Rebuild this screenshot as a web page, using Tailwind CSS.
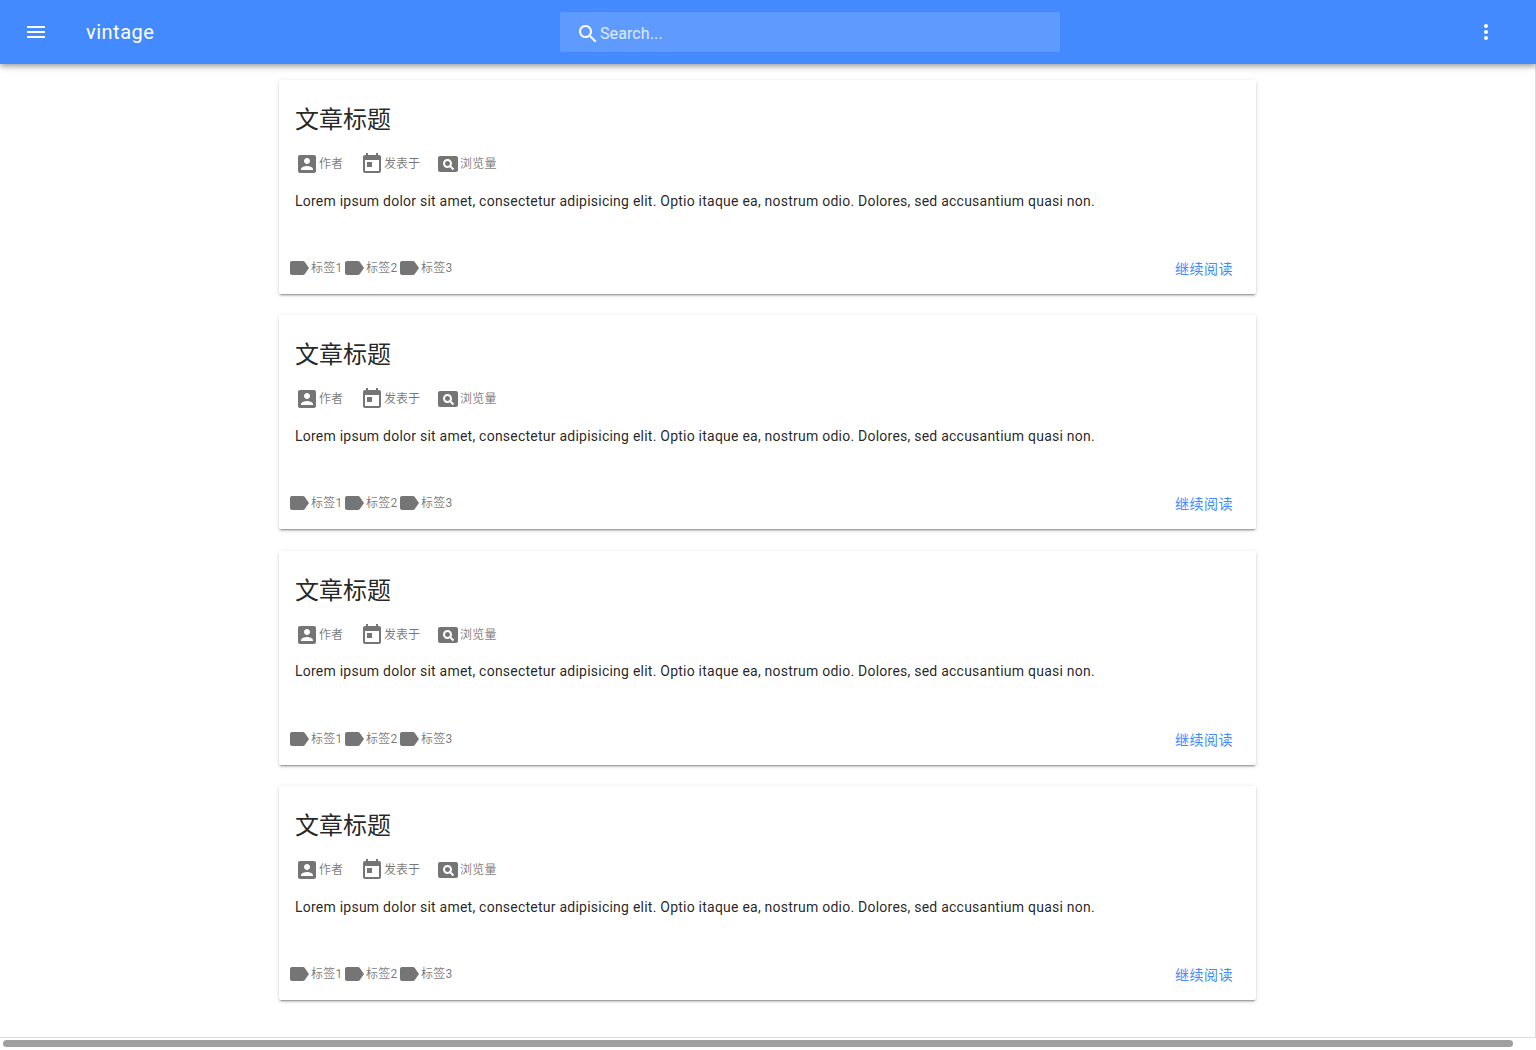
<!DOCTYPE html>
<html lang="en">
<head>
    <meta charset="UTF-8">
    <meta name="viewport" content="width=device-width, initial-scale=1.0">
    <title>vintage</title>
    <script src="https://cdn.jsdelivr.net/npm/@tailwindcss/browser@4"></script>
</head>
<body class="bg-white font-['Roboto','Noto_Sans_CJK_SC',sans-serif] overflow-hidden">
    <!-- icon set, material paths -->
    <svg class="hidden">
        <symbol id="i-menu" viewBox="0 0 24 24"><path d="M3 18h18v-2H3v2zm0-5h18v-2H3v2zm0-7v2h18V6H3z"/></symbol>
        <symbol id="i-more" viewBox="0 0 24 24"><path d="M12 8c1.1 0 2-.9 2-2s-.9-2-2-2-2 .9-2 2 .9 2 2 2zm0 2c-1.1 0-2 .9-2 2s.9 2 2 2 2-.9 2-2-.9-2-2-2zm0 6c-1.1 0-2 .9-2 2s.9 2 2 2 2-.9 2-2-.9-2-2-2z"/></symbol>
        <symbol id="i-search" viewBox="0 0 24 24"><path d="M15.5 14h-.79l-.28-.27C15.41 12.59 16 11.11 16 9.5 16 5.91 13.09 3 9.5 3S3 5.91 3 9.5 5.91 16 9.5 16c1.61 0 3.09-.59 4.23-1.57l.27.28v.79l5 4.99L20.49 19l-4.99-5zm-6 0C7.01 14 5 11.99 5 9.5S7.01 5 9.5 5 14 7.01 14 9.5 11.99 14 9.5 14z"/></symbol>
        <symbol id="i-account" viewBox="0 0 24 24"><path d="M3 5v14c0 1.1.89 2 2 2h14c1.1 0 2-.9 2-2V5c0-1.1-.9-2-2-2H5c-1.11 0-2 .9-2 2zm12 4c0 1.66-1.34 3-3 3s-3-1.34-3-3 1.34-3 3-3 3 1.34 3 3zm-9 8c0-2 4-3.1 6-3.1s6 1.1 6 3.1v1H6v-1z"/></symbol>
        <symbol id="i-today" viewBox="0 0 24 24"><path d="M19 3h-1V1h-2v2H8V1H6v2H5c-1.11 0-1.99.9-1.99 2L3 19c0 1.1.89 2 2 2h14c1.1 0 2-.9 2-2V5c0-1.1-.9-2-2-2zm0 16H5V8h14v11zM7 10h5v5H7z"/></symbol>
        <symbol id="i-pageview" viewBox="0 0 24 24"><path d="M11.5 9C10.12 9 9 10.12 9 11.5s1.12 2.5 2.5 2.5 2.5-1.12 2.5-2.5S12.88 9 11.5 9zM20 4H4c-1.1 0-2 .9-2 2v12c0 1.1.9 2 2 2h16c1.1 0 2-.9 2-2V6c0-1.1-.9-2-2-2zm-3.21 14.21l-2.91-2.91c-.69.44-1.51.7-2.38.7C9 16 7 14 7 11.5S9 7 11.5 7 16 9 16 11.5c0 .88-.26 1.69-.7 2.39l2.91 2.9-1.42 1.42z"/></symbol>
        <symbol id="i-label" viewBox="0 0 24 24"><path d="M17.63 5.84C17.27 5.33 16.67 5 16 5L5 5.01C3.9 5.01 3 5.9 3 7v10c0 1.1.9 1.99 2 1.99L16 19c.67 0 1.27-.33 1.63-.84L22 12l-4.37-6.16z"/></symbol>
    </svg>

    <div class="h-[1050px] flex flex-col">
        <header class="relative z-10 h-16 shrink-0 bg-[#448aff] text-white flex items-center shadow-[0_2px_4px_-1px_rgba(0,0,0,.2),0_4px_5px_0_rgba(0,0,0,.14),0_1px_10px_0_rgba(0,0,0,.12)]">
            <svg class="w-6 h-6 ml-6 fill-white"><use href="#i-menu"/></svg>
            <div class="ml-[38px] w-[474px] text-[20px] tracking-[.5px] leading-8">vintage</div>
            <div class="w-[500px] h-10 rounded-[2px] bg-white/15 flex items-center pl-4">
                <svg class="w-6 h-6 fill-white mt-1"><use href="#i-search"/></svg>
                <span class="text-base tracking-[.1px] text-white/80 mt-1">Search...</span>
            </div>
            <svg class="w-6 h-6 ml-auto mr-[38px] fill-white"><use href="#i-more"/></svg>
        </header>

        <main id="list" class="flex-1 border-r border-[#dcdcdc] pt-4 pl-[279px] flex flex-col gap-[21.33px]">
            <article class="w-[977px] h-[214px] shrink-0 rounded-[2px] bg-white flex flex-col shadow-[0_3px_1px_-2px_rgba(0,0,0,.2),0_2px_2px_0_rgba(0,0,0,.14),0_1px_5px_0_rgba(0,0,0,.12)]">
                <h2 class="mt-6 ml-4 text-2xl leading-8 text-black/87">文章标题</h2>
                <div class="mt-4 ml-4 flex items-center h-6 text-xs whitespace-nowrap text-black/54">
                    <svg class="w-6 h-6 fill-black/54"><use href="#i-account"/></svg><span class="w-6">作者</span>
                    <svg class="w-6 h-6 ml-[17px] fill-black/54"><use href="#i-today"/></svg><span class="w-9">发表于</span>
                    <svg class="w-6 h-6 ml-4 fill-black/54"><use href="#i-pageview"/></svg><span class="tracking-[.3px]">浏览量</span>
                </div>
                <p class="mt-[14.8px] ml-4 text-sm leading-5 tracking-[.234px] text-black/87">Lorem ipsum dolor sit amet, consectetur adipisicing elit. Optio itaque ea, nostrum odio. Dolores, sed accusantium quasi non.</p>
                <div class="mt-auto mb-[14px] ml-2 mr-[23px] flex items-center h-6 text-xs whitespace-nowrap text-black/54">
                    <svg class="w-6 h-6 fill-black/54"><use href="#i-label"/></svg><span class="w-[31px] tracking-[.2px]">标签1</span>
                    <svg class="w-6 h-6 fill-black/54"><use href="#i-label"/></svg><span class="w-[31px] tracking-[.2px]">标签2</span>
                    <svg class="w-6 h-6 fill-black/54"><use href="#i-label"/></svg><span class="w-[31px] tracking-[.2px]">标签3</span>
                    <a class="ml-auto text-sm tracking-[.5px] text-[#448aff] mt-[2px]">继续阅读</a>
                </div>
            </article>
        </main>

        <div class="h-[13px] shrink-0 bg-white border-t border-[#dcdcdc] pt-[2px] pl-[3px]">
            <div class="w-[1510px] h-[7px] rounded-full bg-[#a0a0a0]"></div>
        </div>
    </div>

    <script>
        // same card four times
        const list = document.getElementById('list');
        const card = list.querySelector('article');
        for (let i = 0; i < 3; i++) list.appendChild(card.cloneNode(true));
    </script>
</body>
</html>
